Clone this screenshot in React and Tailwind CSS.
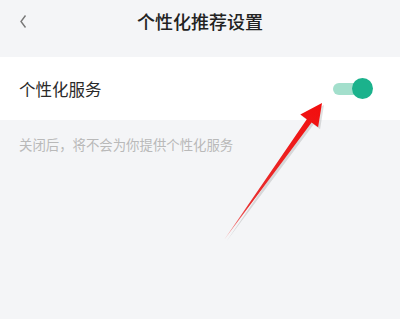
import React from 'react';

const font = { fontFamily: '"Noto Sans CJK SC", "Noto Sans", sans-serif' };

const Toggle = () => (
  <div className="relative w-[40px] h-[22px] flex items-center">
    <div className="w-[36px] h-[12px] rounded-full bg-[#a3dfcc]" />
    <div className="absolute right-0 top-0 w-[21px] h-[21px] rounded-full bg-[#1bb28c]" />
  </div>
);

const Arrow = () => (
  <svg className="absolute inset-0 pointer-events-none" width="400" height="319" viewBox="0 0 400 319">
    <defs>
      <linearGradient id="arr" x1="224" y1="240" x2="322" y2="103" gradientUnits="userSpaceOnUse">
        <stop offset="0" stopColor="#f7a0a0" />
        <stop offset="0.25" stopColor="#e83030" />
        <stop offset="1" stopColor="#f20d0d" />
      </linearGradient>
    </defs>
    <polygon
      points="224,240 306.8,119.2 300.3,114.5 322,103 318.1,127.3 311.6,122.6"
      fill="#000"
      opacity="0.12"
      transform="translate(2 2)"
    />
    <polygon
      points="224,240 306.8,119.2 300.3,114.5 322,103 318.1,127.3 311.6,122.6"
      fill="url(#arr)"
    />
  </svg>
);

export default function App() {
  return (
    <div className="relative w-[400px] h-[319px] bg-[#f4f5f7] overflow-hidden" style={font}>
      {/* header */}
      <div className="relative h-[57px] flex items-center justify-center">
        <svg className="absolute left-[19px] top-[14px]" width="9" height="15" viewBox="0 0 9 15">
          <path d="M6.5 1.5 L2 7.5 L6.5 13.5" fill="none" stroke="#777" strokeWidth="1.4" />
        </svg>
        <span className="text-[18px] leading-none font-medium text-[#222] -mt-[16px]">个性化推荐设置</span>
      </div>

      {/* row */}
      <div className="h-[63px] bg-white flex items-center justify-between pl-[19px] pr-[27px]">
        <span className="text-[16.5px] text-[#2a2a2a] mt-[2px]">个性化服务</span>
        <Toggle />
      </div>

      <div className="pl-[19px] pt-[14px] text-[13.4px] leading-[20px] text-[#b9b9b9]">
        关闭后，将不会为你提供个性化服务
      </div>

      <Arrow />
    </div>
  );
}
